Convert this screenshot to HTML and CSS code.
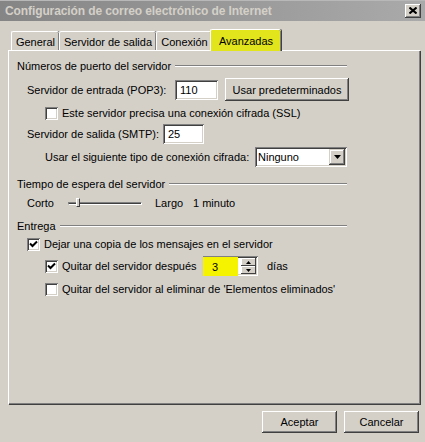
FILE: index.html
```html
<!DOCTYPE html>
<html>
<head>
  <meta charset="utf-8">
  <link rel="stylesheet" href="styles.css">
</head>
<body>
  <div class="window">
    <div class="titlebar">
      <span class="title">Configuración de correo electrónico de Internet</span>
      <button class="close-btn" title="Cerrar">
        <svg width="8" height="7" viewBox="0 0 8 7"><path d="M0.5 0.5 L7.5 6.5 M7.5 0.5 L0.5 6.5" stroke="#000" stroke-width="2"/></svg>
      </button>
    </div>

    <div class="tabs">
      <div class="tab tab-general">General</div>
      <div class="tab tab-salida">Servidor de salida</div>
      <div class="tab tab-conexion">Conexión</div>
      <div class="tab tab-avanzadas active">Avanzadas</div>
    </div>

    <div class="panel">
      <div class="group-title"><span>Números de puerto del servidor</span><div class="etch"></div></div>

      <div class="row row-pop3 indent-1">
        <label class="lbl-pop3">Servidor de entrada (POP3):</label>
        <div class="field field-pop3">110</div>
        <button class="btn btn-defaults">Usar predeterminados</button>
      </div>

      <div class="row row-ssl indent-2">
        <span class="check"></span>
        <label>Este servidor precisa una conexión cifrada (SSL)</label>
      </div>

      <div class="row row-smtp indent-1">
        <label class="lbl-smtp">Servidor de salida (SMTP):</label>
        <div class="field field-smtp">25</div>
      </div>

      <div class="row row-enc indent-2">
        <label class="lbl-enc">Usar el siguiente tipo de conexión cifrada:</label>
        <div class="field select">
          <span class="select-value">Ninguno</span>
          <span class="select-btn">
            <svg width="7" height="4" viewBox="0 0 7 4"><path d="M0 0 H7 L3.5 4 Z" fill="#000"/></svg>
          </span>
        </div>
      </div>

      <div class="group-title group-timeout"><span>Tiempo de espera del servidor</span><div class="etch"></div></div>

      <div class="row row-slider indent-1">
        <label class="lbl-short">Corto</label>
        <div class="slider">
          <div class="track"></div>
          <div class="thumb"></div>
        </div>
        <label class="lbl-long">Largo</label>
        <label>1 minuto</label>
      </div>

      <div class="group-title group-delivery"><span>Entrega</span><div class="etch"></div></div>

      <div class="row row-copy indent-1">
        <span class="check checked">
          <svg width="9" height="9" viewBox="0 0 9 9"><path d="M1 3.5 L3.5 6 L8 1.5" stroke="#000" stroke-width="2" fill="none"/></svg>
        </span>
        <label>Dejar una copia de los mensajes en el servidor</label>
      </div>

      <div class="row row-days indent-2">
        <span class="check checked">
          <svg width="9" height="9" viewBox="0 0 9 9"><path d="M1 3.5 L3.5 6 L8 1.5" stroke="#000" stroke-width="2" fill="none"/></svg>
        </span>
        <label class="lbl-days">Quitar del servidor después</label>
        <div class="field spinner">
          <span class="spinner-value">3</span>
          <span class="spinner-btns">
            <span class="spin-btn"><svg width="5" height="3" viewBox="0 0 5 3"><path d="M0 3 H5 L2.5 0 Z" fill="#000"/></svg></span>
            <span class="spin-btn"><svg width="5" height="3" viewBox="0 0 5 3"><path d="M0 0 H5 L2.5 3 Z" fill="#000"/></svg></span>
          </span>
        </div>
        <label class="lbl-dias">días</label>
      </div>

      <div class="row row-deleted indent-2">
        <span class="check"></span>
        <label>Quitar del servidor al eliminar de 'Elementos eliminados'</label>
      </div>
    </div>

    <div class="footer">
      <button class="btn btn-dialog">Aceptar</button>
      <button class="btn btn-dialog">Cancelar</button>
    </div>
  </div>
</body>
</html>
```

FILE: styles.css
```css
:root {
  --face: #d4d0c8;
  --shadow: #808080;
  --dark: #404040;
  --light: #ffffff;
  --marker: #e2e41c;
}

* {
  margin: 0;
  padding: 0;
  box-sizing: border-box;
}

body {
  width: 425px;
  height: 442px;
  background: var(--face);
  font-family: "Liberation Sans", Arial, sans-serif;
  font-size: 11px;
  color: #000;
  overflow: hidden;
}

button {
  font: inherit;
  color: inherit;
}

/* Classic 3D bevels */
.btn {
  background: var(--face);
  border: none;
  box-shadow: inset -1px -1px var(--dark), inset 1px 1px var(--light),
              inset -2px -2px var(--shadow), inset 2px 2px var(--face);
  display: flex;
  align-items: center;
  justify-content: center;
}

.field {
  background: #fff;
  box-shadow: inset 1px 1px var(--shadow), inset -1px -1px var(--light),
              inset 2px 2px var(--dark), inset -2px -2px var(--face);
  display: flex;
  align-items: center;
  padding: 0 5px;
}

/* Title bar (inactive) */
.titlebar {
  height: 21px;
  display: flex;
  align-items: center;
  justify-content: space-between;
  padding: 0 4px 0 5px;
  background: linear-gradient(to right, #858585, #aaaaaa);
  border-top: 1px solid #b8b8b8;
}

.title {
  color: #d4d0c8;
  font-weight: bold;
  font-size: 12px;
  letter-spacing: -0.1px;
}

.close-btn {
  width: 16px;
  height: 14px;
  background: var(--face);
  border: none;
  box-shadow: inset -1px -1px var(--dark), inset 1px 1px var(--light),
              inset -2px -2px var(--shadow);
  display: flex;
  align-items: center;
  justify-content: center;
  padding-bottom: 1px;
}

/* Tabs */
.tabs {
  display: flex;
  align-items: flex-end;
  height: 21px;
  margin-top: 8px;
  padding-left: 11px;
  position: relative;
  z-index: 1;
}

.tab {
  height: 19px;
  display: flex;
  align-items: center;
  justify-content: center;
  background: var(--face);
  border-top: 1px solid var(--light);
  border-left: 1px solid var(--light);
  border-radius: 2px 2px 0 0;
  box-shadow: inset -1px 0 var(--shadow), 1px 0 var(--dark);
  padding-top: 1px;
}

.tab-general { width: 48px; }
.tab-salida { width: 97px; }
.tab-conexion { width: 56px; }

.tab.active {
  width: 71px;
  height: 22px;
  margin-left: -2px;
  margin-bottom: -1px;
  background: var(--marker);
  padding-top: 0;
}

/* Tab page */
.panel {
  width: 412px;
  height: 354px;
  margin-left: 8px;
  border-top: 1px solid var(--light);
  border-left: 1px solid var(--light);
  box-shadow: inset -1px -1px var(--shadow), 1px 1px var(--dark);
  padding: 7px 8px 0 8px;
}

.group-title {
  width: 330px;
  height: 16px;
  display: flex;
  align-items: center;
  gap: 4px;
}

.etch {
  flex: 1;
  height: 2px;
  border-top: 1px solid var(--shadow);
  border-bottom: 1px solid var(--light);
}

.group-timeout { margin-top: 9px; }
.group-delivery { margin-top: 7px; }

.row {
  display: flex;
  align-items: center;
}

.indent-1 { padding-left: 10px; }
.indent-2 { padding-left: 28px; }

.row-pop3 { height: 23px; margin-top: 4px; }
.row-ssl { height: 14px; margin-top: 5px; }
.row-smtp { height: 20px; margin-top: 4px; }
.row-enc { height: 20px; margin-top: 3px; }
.row-slider { height: 16px; margin-top: 3px; }
.row-copy { height: 14px; margin-top: 3px; padding-left: 10px; }
.row-days { height: 20px; margin-top: 5px; }
.row-deleted { height: 14px; margin-top: 6px; }

.lbl-pop3 { width: 148px; }
.field-pop3 { width: 43px; height: 20px; }
.btn-defaults { width: 124px; height: 23px; margin-left: 7px; }

.lbl-smtp { width: 136px; }
.field-smtp { width: 41px; height: 20px; }

.lbl-enc { width: 210px; }

/* Checkboxes */
.check {
  width: 13px;
  height: 13px;
  margin-right: 4px;
  background: #fff;
  box-shadow: inset 1px 1px var(--shadow), inset -1px -1px var(--light),
              inset 2px 2px var(--dark), inset -2px -2px var(--face);
  display: flex;
  align-items: center;
  justify-content: center;
  flex-shrink: 0;
}

.check svg { margin-top: 1px; }

/* Dropdown */
.select {
  width: 92px;
  height: 20px;
  padding: 0 2px 0 3px;
  justify-content: space-between;
}

.select-btn {
  width: 16px;
  height: 16px;
  background: var(--face);
  box-shadow: inset -1px -1px var(--dark), inset 1px 1px var(--face),
              inset -2px -2px var(--shadow), inset 2px 2px var(--light);
  display: flex;
  align-items: center;
  justify-content: center;
}

/* Slider */
.lbl-short { width: 41px; }

.slider {
  width: 74px;
  height: 16px;
  position: relative;
  display: flex;
  align-items: center;
}

.track {
  width: 100%;
  height: 3px;
  border-top: 1px solid var(--shadow);
  border-left: 1px solid var(--shadow);
  border-bottom: 1px solid var(--light);
  border-right: 1px solid var(--light);
  background: var(--dark);
  background-clip: content-box;
}

.thumb {
  position: absolute;
  left: 8px;
  top: 3px;
  width: 4px;
  height: 9px;
  background: var(--face);
  border-left: 1px solid var(--light);
  border-top: 1px solid var(--light);
  border-right: 1px solid var(--dark);
  border-bottom: 1px solid var(--dark);
}

.lbl-long { margin-left: 13px; width: 38px; }

/* Spinner */
.lbl-days { width: 141px; }

.spinner {
  width: 55px;
  height: 20px;
  padding: 0 2px 0 0;
  background: #fff;
}

.spinner-value {
  flex: 1;
  align-self: stretch;
  display: flex;
  align-items: center;
  padding-left: 9px;
  margin: 1px 3px 0 0;
  background: #f6f300;
}

.spinner-btns {
  display: flex;
  flex-direction: column;
  width: 15px;
  height: 16px;
}

.spin-btn {
  flex: 1;
  background: var(--face);
  box-shadow: inset -1px -1px var(--dark), inset 1px 1px var(--light);
  display: flex;
  align-items: center;
  justify-content: center;
}

.lbl-dias { margin-left: 9px; }

/* Dialog buttons */
.footer {
  display: flex;
  justify-content: flex-end;
  gap: 7px;
  margin-top: 7px;
  padding-right: 6px;
}

.btn-dialog {
  width: 75px;
  height: 22px;
}
```
